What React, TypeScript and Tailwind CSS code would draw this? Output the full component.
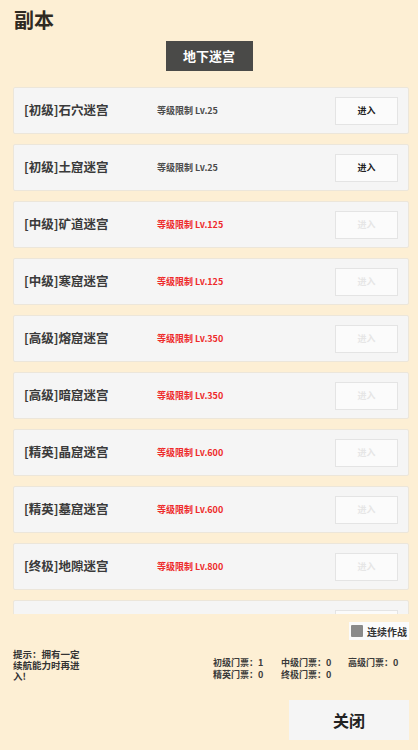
import React from 'react';

const font = { fontFamily: '"Noto Sans CJK SC", "Noto Sans", sans-serif' };

const dungeons = [
  { name: '[初级]石穴迷宫', level: 25, open: true },
  { name: '[初级]土窟迷宫', level: 25, open: true },
  { name: '[中级]矿道迷宫', level: 125, open: false },
  { name: '[中级]寒窟迷宫', level: 125, open: false },
  { name: '[高级]熔窟迷宫', level: 350, open: false },
  { name: '[高级]暗窟迷宫', level: 350, open: false },
  { name: '[精英]晶窟迷宫', level: 600, open: false },
  { name: '[精英]墓窟迷宫', level: 600, open: false },
  { name: '[终极]地隙迷宫', level: 800, open: false },
];

const tickets = ['初级门票：1', '中级门票：0', '高级门票：0', '精英门票：0', '终极门票：0'];

function DungeonRow({ name, level, open }: { name: string; level: number; open: boolean }) {
  return (
    <div className="flex h-[47px] shrink-0 items-center rounded-[2px] border border-[#ece6da] bg-[#f5f5f5] pl-[10px] pr-[10px]">
      <span className="w-[133px] text-[12.5px] font-bold text-[#3a3a3a]">{name}</span>
      <span className={`text-[9px] font-bold ${open ? 'text-[#4a4a4a]' : 'text-[#ee2a2a]'}`}>
        等级限制 Lv.{level}
      </span>
      <button
        className={`ml-auto flex h-[28px] w-[63px] items-center justify-center border border-[#e4e4e4] bg-[#fbfbfb] text-[9px] font-bold ${
          open ? 'text-[#222]' : 'text-[#e6e6e6]'
        }`}
      >
        进入
      </button>
    </div>
  );
}

export default function App() {
  return (
    <div className="flex h-[750px] w-[418px] flex-col overflow-hidden bg-[#fdefd4]" style={font}>
      <h1 className="pl-[14px] pt-[6px] text-[20px] leading-[28px] font-bold text-[#2f2a22]">副本</h1>
      <div className="mt-[7px] flex justify-center">
        <div className="flex h-[30px] w-[87px] items-center justify-center bg-[#4a4a48] text-[13px] font-bold text-white">
          地下迷宫
        </div>
      </div>
      <div className="mt-[16px] flex h-[527px] flex-col gap-[10px] overflow-hidden px-[13px] pr-[9px]">
        {dungeons.map((d) => (
          <DungeonRow key={d.name} {...d} />
        ))}
        {/* next row peeking in from below the scroll area */}
        <div className="flex h-[47px] shrink-0 items-center rounded-[2px] border border-[#ece6da] bg-[#f5f5f5] pr-[10px]">
          <div className="ml-auto h-[28px] w-[63px] border border-[#e4e4e4] bg-[#fbfbfb]" />
        </div>
      </div>
      <div className="mt-[8px] flex justify-end pr-[9px]">
        <label className="flex h-[18px] items-center gap-[4px] bg-[#fbfbfb] px-[2px] text-[10px] font-bold text-[#333]">
          <span className="h-[12px] w-[12px] rounded-[1px] bg-[#8a8a8a]" />
          连续作战
        </label>
      </div>
      <div className="mt-[9px] flex items-start pl-[13px]">
        <p className="w-[68px] text-[9.5px] leading-[11px] font-bold text-[#333]">提示：拥有一定续航能力时再进入!</p>
        <div className="ml-[132px] mt-[8px] grid grid-cols-[68px_67px_67px] text-[9px] leading-[12px] font-bold text-[#3a3a3a]">
          {tickets.map((t) => (
            <span key={t}>{t}</span>
          ))}
        </div>
      </div>
      <div className="mt-auto mb-[10px] flex justify-end pr-[9px]">
        <button className="h-[40px] w-[120px] bg-[#f5f5f5] text-[16px] font-bold text-[#222]">关闭</button>
      </div>
    </div>
  );
}
